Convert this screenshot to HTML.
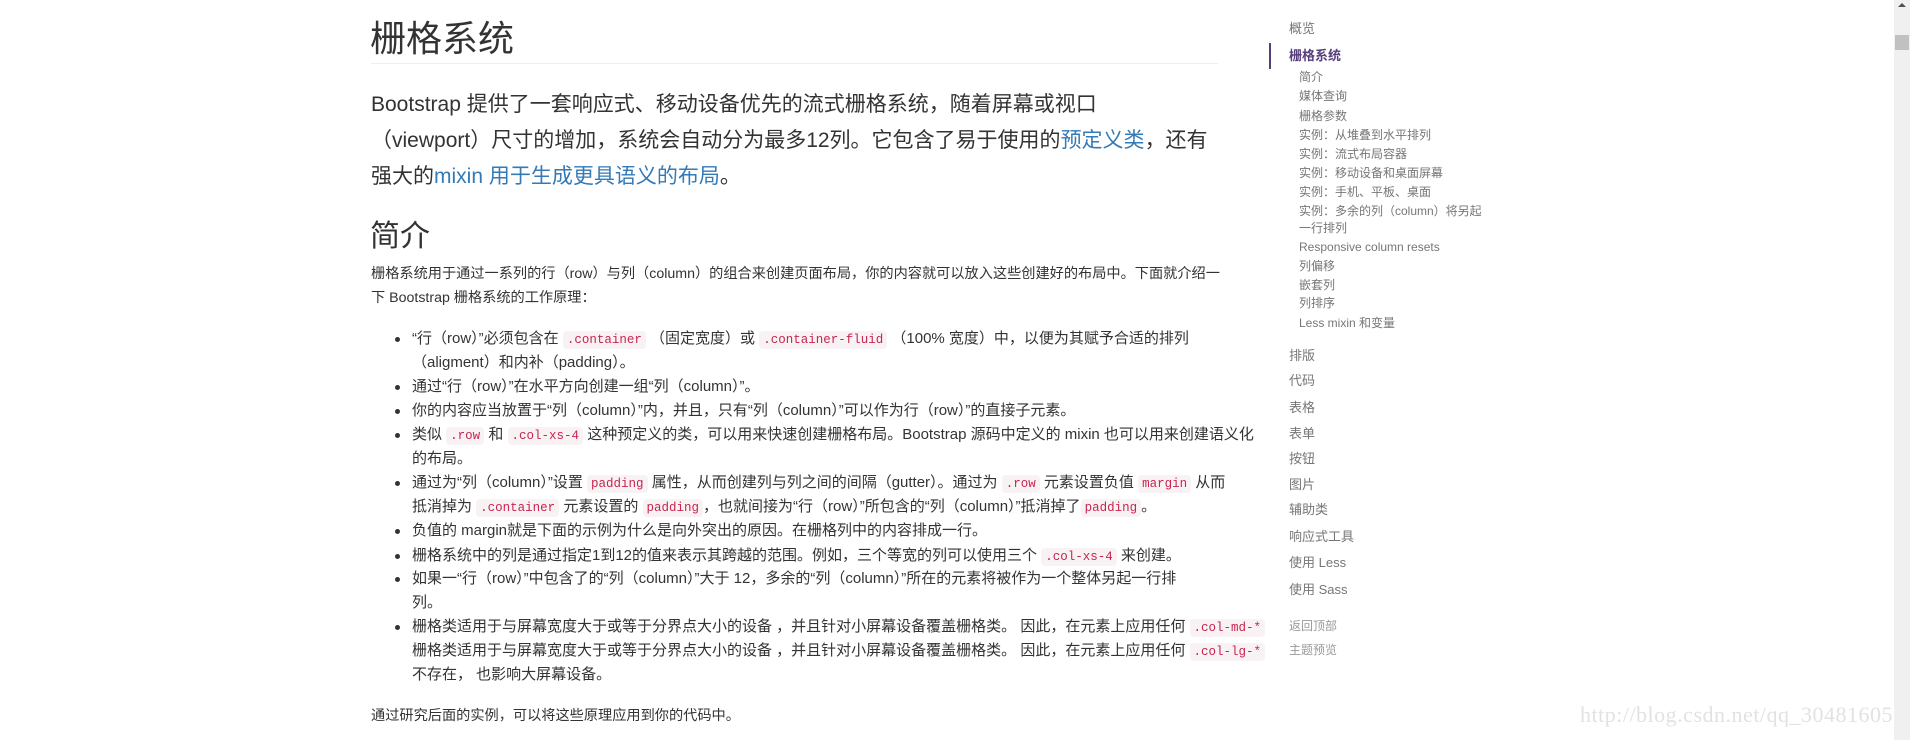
<!DOCTYPE html>
<html><head><meta charset="utf-8">
<style>
body{margin:0;width:1910px;height:740px;overflow:hidden;background:#fff;position:relative;font-family:"Liberation Sans","Noto Sans CJK SC",sans-serif;color:#333}
.a{position:absolute;white-space:nowrap}
.t{font-size:15px;line-height:24px}
code{font-family:"Liberation Mono","DejaVu Sans Mono",monospace;font-size:12.5px;color:#c7254e;background:#f9f2f4;padding:2px 4px;border-radius:4px}
.dot{position:absolute;width:5px;height:5px;border-radius:50%;background:#333}
a{color:#337ab7;text-decoration:none}
.s{position:absolute;left:1289px;font-size:13px;color:#767676;white-space:nowrap;line-height:18px}
.ss{position:absolute;left:1299px;font-size:12px;color:#767676;white-space:nowrap;line-height:16px}
</style></head><body>
<div class="a" style="left:370px;top:17px;font-size:36px;line-height:44px;color:#333">栅格系统</div>
<div class="a" style="left:371px;top:63px;width:847px;height:1px;background:#eee"></div>
<div class="a" style="left:371px;top:87px;font-size:21px;line-height:36px">Bootstrap 提供了一套响应式、移动设备优先的流式栅格系统，随着屏幕或视口</div>
<div class="a" style="left:371px;top:123px;font-size:21px;line-height:36px">（viewport）尺寸的增加，系统会自动分为最多12列。它包含了易于使用的<a>预定义类</a>，还有</div>
<div class="a" style="left:371px;top:159px;font-size:21px;line-height:36px">强大的<a>mixin 用于生成更具语义的布局</a>。</div>
<div class="a" style="left:370px;top:218px;font-size:30px;line-height:38px">简介</div>
<div class="a t" style="left:371px;top:262px;font-size:14.2px">栅格系统用于通过一系列的行（row）与列（column）的组合来创建页面布局，你的内容就可以放入这些创建好的布局中。下面就介绍一</div>
<div class="a t" style="left:371px;top:286px;font-size:14.2px">下 Bootstrap 栅格系统的工作原理：</div>

<div class="dot" style="left:395px;top:337px"></div>
<div class="a t" style="left:412px;top:327px">“行（row）”必须包含在 <code>.container</code> （固定宽度）或 <code>.container-fluid</code> （100% 宽度）中，以便为其赋予合适的排列</div>
<div class="a t" style="left:412px;top:351px">（aligment）和内补（padding）。</div>
<div class="dot" style="left:395px;top:385px"></div>
<div class="a t" style="left:412px;top:375px">通过“行（row）”在水平方向创建一组“列（column）”。</div>
<div class="dot" style="left:395px;top:409px"></div>
<div class="a t" style="left:412px;top:399px">你的内容应当放置于“列（column）”内，并且，只有“列（column）”可以作为行（row）”的直接子元素。</div>
<div class="dot" style="left:395px;top:433px"></div>
<div class="a t" style="left:412px;top:423px">类似 <code>.row</code> 和 <code>.col-xs-4</code> 这种预定义的类，可以用来快速创建栅格布局。Bootstrap 源码中定义的 mixin 也可以用来创建语义化</div>
<div class="a t" style="left:412px;top:447px">的布局。</div>
<div class="dot" style="left:395px;top:481px"></div>
<div class="a t" style="left:412px;top:471px">通过为“列（column）”设置 <code>padding</code> 属性，从而创建列与列之间的间隔（gutter）。通过为 <code>.row</code> 元素设置负值 <code>margin</code> 从而</div>
<div class="a t" style="left:412px;top:495px">抵消掉为 <code>.container</code> 元素设置的 <code>padding</code>，也就间接为“行（row）”所包含的“列（column）”抵消掉了<code>padding</code>。</div>
<div class="dot" style="left:395px;top:529px"></div>
<div class="a t" style="left:412px;top:519px">负值的 margin就是下面的示例为什么是向外突出的原因。在栅格列中的内容排成一行。</div>
<div class="dot" style="left:395px;top:554px"></div>
<div class="a t" style="left:412px;top:544px">栅格系统中的列是通过指定1到12的值来表示其跨越的范围。例如，三个等宽的列可以使用三个 <code>.col-xs-4</code> 来创建。</div>
<div class="dot" style="left:395px;top:577px"></div>
<div class="a t" style="left:412px;top:567px">如果一“行（row）”中包含了的“列（column）”大于 12，多余的“列（column）”所在的元素将被作为一个整体另起一行排</div>
<div class="a t" style="left:412px;top:591px">列。</div>
<div class="dot" style="left:395px;top:625px"></div>
<div class="a t" style="left:412px;top:615px">栅格类适用于与屏幕宽度大于或等于分界点大小的设备 ，并且针对小屏幕设备覆盖栅格类。 因此，在元素上应用任何 <code>.col-md-*</code></div>
<div class="a t" style="left:412px;top:639px">栅格类适用于与屏幕宽度大于或等于分界点大小的设备 ，并且针对小屏幕设备覆盖栅格类。 因此，在元素上应用任何 <code>.col-lg-*</code></div>
<div class="a t" style="left:412px;top:663px">不存在， 也影响大屏幕设备。</div>
<div class="a t" style="left:371px;top:704px;font-size:14.2px">通过研究后面的实例，可以将这些原理应用到你的代码中。</div>

<div class="a" style="left:1269px;top:43px;width:2px;height:26px;background:#563d7c"></div>
<div class="s" style="top:20px">概览</div>
<div class="s" style="top:47px;color:#563d7c;font-weight:bold">栅格系统</div>
<div class="ss" style="top:69px">简介</div>
<div class="ss" style="top:88px">媒体查询</div>
<div class="ss" style="top:108px">栅格参数</div>
<div class="ss" style="top:127px">实例：从堆叠到水平排列</div>
<div class="ss" style="top:146px">实例：流式布局容器</div>
<div class="ss" style="top:165px">实例：移动设备和桌面屏幕</div>
<div class="ss" style="top:184px">实例：手机、平板、桌面</div>
<div class="ss" style="top:203px">实例：多余的列（column）将另起</div>
<div class="ss" style="top:220px">一行排列</div>
<div class="ss" style="top:239px">Responsive column resets</div>
<div class="ss" style="top:258px">列偏移</div>
<div class="ss" style="top:277px">嵌套列</div>
<div class="ss" style="top:295px">列排序</div>
<div class="ss" style="top:315px">Less mixin 和变量</div>
<div class="s" style="top:347px">排版</div>
<div class="s" style="top:372px">代码</div>
<div class="s" style="top:399px">表格</div>
<div class="s" style="top:425px">表单</div>
<div class="s" style="top:450px">按钮</div>
<div class="s" style="top:476px">图片</div>
<div class="s" style="top:501px">辅助类</div>
<div class="s" style="top:528px">响应式工具</div>
<div class="s" style="top:554px">使用 Less</div>
<div class="s" style="top:581px">使用 Sass</div>
<div class="s" style="top:617px;font-size:12px;color:#999">返回顶部</div>
<div class="s" style="top:641px;font-size:12px;color:#999">主题预览</div>

<div class="a" style="left:1580px;top:700px;font-family:'Liberation Serif','DejaVu Serif',serif;font-size:22px;color:#e2e2e2;line-height:30px;letter-spacing:0.5px">http://blog.csdn.net/qq_30481605</div>

<div class="a" style="left:1894px;top:0;width:16px;height:740px;background:#f0f0f0"></div>
<div class="a" style="left:1898px;top:3px;width:0;height:0;border-left:4px solid transparent;border-right:4px solid transparent;border-bottom:4px solid #505050"></div>
<div class="a" style="left:1895px;top:35px;width:14px;height:15px;background:#c1c1c1"></div>
</body></html>
